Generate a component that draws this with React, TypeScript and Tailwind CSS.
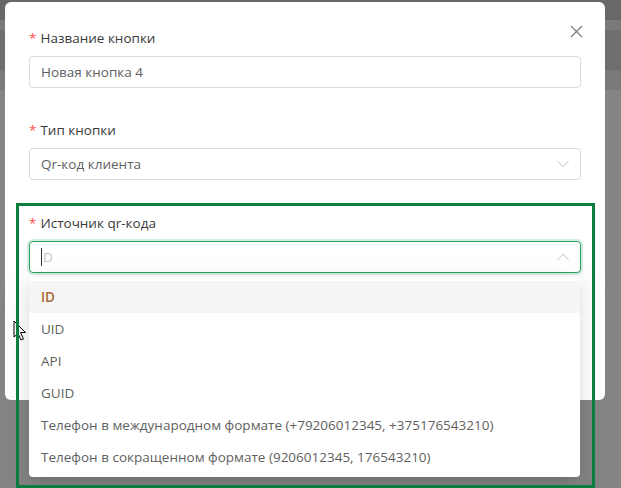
import React from 'react'

const options = [
  'ID',
  'UID',
  'API',
  'GUID',
  'Телефон в международном формате (+79206012345, +375176543210)',
  'Телефон в сокращенном формате (9206012345, 176543210)',
]

function Label({ text }: { text: string }) {
  return (
    <div className="flex items-center h-[22px] text-[13.5px] text-[#3a3a3a]">
      <span className="text-[#ff4d4f] mr-[4px]">*</span>
      {text}
    </div>
  )
}

function Chevron({ up }: { up?: boolean }) {
  return (
    <svg width="12" height="8" viewBox="0 0 12 8" fill="none" className="text-[#bfbfbf]">
      <path d={up ? 'M0.5 7L6 1.2L11.5 7' : 'M0.5 1L6 6.8L11.5 1'} stroke="currentColor" strokeWidth="1" />
    </svg>
  )
}

export default function App() {
  return (
    <div className="relative w-[621px] h-[488px] overflow-hidden bg-[#858585] font-['Open_Sans',sans-serif]">
      {/* page behind the overlay */}
      <div className="flex flex-col">
        <div className="h-[20px] bg-[#686868]" />
        <div className="h-[10px] bg-[#7a7a7a]" />
        <div className="h-[40px] bg-[#6e6e6e]" />
        <div className="h-[20px] bg-[#7a7a7a]" />
      </div>

      {/* modal */}
      <div className="absolute left-[5px] top-[2px] w-[600px] h-[398px] bg-white rounded-[6px] px-[24px] pt-[25px]">
        <button className="absolute right-[22px] top-[22px] w-[14px] h-[14px] flex items-center justify-center">
          <svg width="13" height="13" viewBox="0 0 13 13" className="text-[#7a7a7a]">
            <path d="M1 1L12 12M12 1L1 12" stroke="currentColor" strokeWidth="1.2" />
          </svg>
        </button>

        <Label text="Название кнопки" />
        <div className="mt-[7px] h-[32px] border border-[#d9d9d9] rounded-[4px] flex items-center px-[11px] text-[13.5px] text-[#5f5f5f]">
          Новая кнопка 4
        </div>

        <div className="mt-[31px]">
          <Label text="Тип кнопки" />
        </div>
        <div className="mt-[7px] h-[32px] border border-[#d9d9d9] rounded-[4px] flex items-center justify-between px-[11px] text-[13.5px] text-[#5f5f5f]">
          Qr-код клиента
          <Chevron />
        </div>

        <div className="mt-[32px]">
          <Label text="Источник qr-кода" />
        </div>
        <div className="mt-[7px] h-[32px] border border-[#27a060] rounded-[4px] shadow-[0_0_0_2px_rgba(39,160,96,0.2)] flex items-center justify-between px-[11px] text-[13.5px] text-[#c4c4c4]">
          <span className="flex items-center">
            <span className="w-px h-[18px] bg-[#333] mr-[1px]" />
            D
          </span>
          <Chevron up />
        </div>
      </div>

      {/* mouse pointer */}
      <svg className="absolute left-[13px] top-[320px]" width="14" height="21" viewBox="0 0 14 21">
        <path d="M1 1V17L5 13.5L8 20L10.5 19L7.5 12.5H12.5Z" fill="white" stroke="black" strokeWidth="1" />
      </svg>

      {/* dropdown */}
      <div className="absolute left-[29px] top-[277px] w-[551px] bg-white rounded-[4px] py-[4px] shadow-[0_3px_6px_-4px_rgba(0,0,0,0.12),0_6px_16px_0_rgba(0,0,0,0.08),0_9px_28px_8px_rgba(0,0,0,0.05)]">
        {options.map((o, i) => (
          <div
            key={o}
            className={
              i === 0
                ? 'h-[32px] flex items-center px-[12px] text-[13.5px] bg-[#f5f5f5] text-[#a8692f] font-semibold'
                : 'h-[32px] flex items-center px-[12px] text-[13.5px] text-[#5f5f5f]'
            }
          >
            {o}
          </div>
        ))}
      </div>

      {/* highlight frame */}
      <div className="absolute left-[16px] top-[203px] w-[579px] h-[285px] border-[3px] border-[#0b7d3e] pointer-events-none" />
    </div>
  )
}
